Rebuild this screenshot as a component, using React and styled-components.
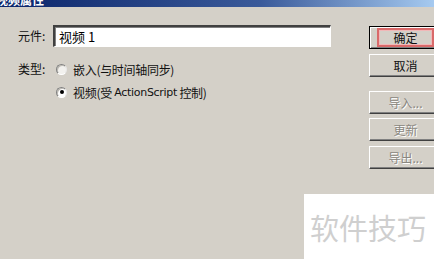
import React, { useState } from 'react';
import styled, { createGlobalStyle } from 'styled-components';

const GlobalStyle = createGlobalStyle`
  html, body {
    margin: 0;
    padding: 0;
    width: 434px;
    height: 259px;
    overflow: hidden;
    background: #d4d0c8;
  }
`;

const Ventana = styled.div`
  position: relative;
  width: 434px;
  height: 259px;
  background: #d4d0c8;
  font-family: "Liberation Sans", "Noto Sans CJK SC", sans-serif;
  font-size: 12px;
  color: #000;
  overflow: hidden;
`;

const BarraTitulo = styled.div`
  height: 7px;
  background: linear-gradient(to right, #0a246a 0%, #3a5a9a 60%, #a6caf0 100%);
  overflow: hidden;
`;

const TextoTitulo = styled.div`
  color: #fff;
  font-weight: bold;
  font-size: 12px;
  line-height: 12px;
  margin-top: -6px;
  margin-left: -4px;
  font-family: "Noto Sans CJK SC", sans-serif;
`;

const Cuerpo = styled.div`
  display: flex;
  padding-top: 18px;
`;

const Formulario = styled.div`
  flex: 0 0 369px;
  padding-left: 18px;
  box-sizing: border-box;
`;

const Fila = styled.div`
  display: flex;
  align-items: ${p => (p.$arriba ? 'flex-start' : 'center')};
  margin-top: ${p => p.$margen || 0}px;
`;

const Etiqueta = styled.span`
  width: 35px;
  font-family: "Noto Sans CJK SC", sans-serif;
  font-size: 12px;
  line-height: 22px;
  color: #111;
`;

const Campo = styled.input`
  width: 278px;
  height: 22px;
  box-sizing: border-box;
  border-style: solid;
  border-width: 2px 1px 1px 2px;
  border-color: #404040 #ffffff #ffffff #404040;
  box-shadow: inset 1px 1px 0 #808080, 1px 1px 0 #d4d0c8;
  padding: 0 4px;
  font-family: "Noto Sans CJK SC", sans-serif;
  font-size: 13px;
  background: #fff;
  outline: none;
`;

const GrupoRadio = styled.div`
  display: flex;
  flex-direction: column;
  gap: 1px;
  margin-left: 3px;
`;

const OpcionRadio = styled.label`
  display: flex;
  align-items: center;
  height: 22px;
  font-family: "Noto Sans CJK SC", sans-serif;
  font-size: 12px;
  letter-spacing: -0.3px;
  color: #111;
  cursor: default;
`;

const Circulo = styled.span`
  width: 11px;
  height: 11px;
  border-radius: 50%;
  box-sizing: border-box;
  background: ${p => (p.$activo ? '#fff' : '#f2f1ee')};
  border: 1px solid;
  border-color: #808080 #e8e8e8 #ffffff #808080;
  box-shadow: inset 1px 1px 0 #bdbab3;
  margin-right: 6px;
  display: flex;
  align-items: center;
  justify-content: center;
  &::after {
    content: '';
    width: 4px;
    height: 4px;
    border-radius: 50%;
    background: #000;
    display: ${p => (p.$activo ? 'block' : 'none')};
  }
`;

const Latino = styled.span`
  font-family: "DejaVu Sans", "Liberation Sans", sans-serif;
  font-size: 11px;
  letter-spacing: -0.3px;
`;

const ColumnaBotones = styled.div`
  flex: 0 0 74px;
  display: flex;
  flex-direction: column;
  padding-top: 1px;
`;

const Boton = styled.button`
  position: relative;
  width: 74px;
  height: 23px;
  margin-top: ${p => p.$margen || 0}px;
  box-sizing: border-box;
  background: #d4d0c8;
  border-style: solid;
  border-width: 1px;
  border-color: ${p => (p.$defecto ? '#000' : '#ffffff #404040 #404040 #ffffff')};
  box-shadow: ${p =>
    p.$defecto
      ? 'inset 1px 1px 0 #fff, inset -1px -1px 0 #808080'
      : 'inset -1px -1px 0 #808080'};
  font-family: "Noto Sans CJK SC", sans-serif;
  font-size: 12px;
  color: ${p => (p.disabled ? '#8a8780' : '#111')};
  text-shadow: ${p => (p.disabled ? '1px 1px 0 #fff' : 'none')};
  padding: 0;
  padding-right: 1px;
  cursor: default;
`;

const MarcoRojo = styled.span`
  position: absolute;
  left: 7px;
  top: 1px;
  right: 8px;
  bottom: 1px;
  border: 2px solid #d96a6a;
  box-shadow: inset 0 0 0 1px #f1b8b8;
  pointer-events: none;
`;

const Marca = styled.div`
  position: absolute;
  right: 0;
  bottom: 0;
  width: 130px;
  height: 65px;
  background: #fff;
  display: flex;
  align-items: center;
  padding-left: 6px;
  box-sizing: border-box;
  font-family: "Noto Sans CJK SC", sans-serif;
  font-size: 29px;
  color: #cfcfcf;
`;

export default function App() {
  const [tipo, setTipo] = useState('video');

  return (
    <Ventana>
      <GlobalStyle />
      <BarraTitulo>
        <TextoTitulo>视频属性</TextoTitulo>
      </BarraTitulo>
      <Cuerpo>
        <Formulario>
          <Fila>
            <Etiqueta>元件:</Etiqueta>
            <Campo defaultValue="视频 1" />
          </Fila>
          <Fila $arriba $margen={11}>
            <Etiqueta>类型:</Etiqueta>
            <GrupoRadio>
              <OpcionRadio onClick={() => setTipo('embed')}>
                <Circulo $activo={tipo === 'embed'} />
                嵌入(与时间轴同步)
              </OpcionRadio>
              <OpcionRadio onClick={() => setTipo('video')}>
                <Circulo $activo={tipo === 'video'} />
                视频(受&nbsp;<Latino>ActionScript</Latino>&nbsp;控制)
              </OpcionRadio>
            </GrupoRadio>
          </Fila>
        </Formulario>
        <ColumnaBotones>
          <Boton $defecto>
            确定
            <MarcoRojo />
          </Boton>
          <Boton $margen={5}>取消</Boton>
          <Boton $margen={14} disabled>导入...</Boton>
          <Boton $margen={4} disabled>更新</Boton>
          <Boton $margen={5} disabled>导出...</Boton>
        </ColumnaBotones>
      </Cuerpo>
      <Marca>软件技巧</Marca>
    </Ventana>
  );
}
